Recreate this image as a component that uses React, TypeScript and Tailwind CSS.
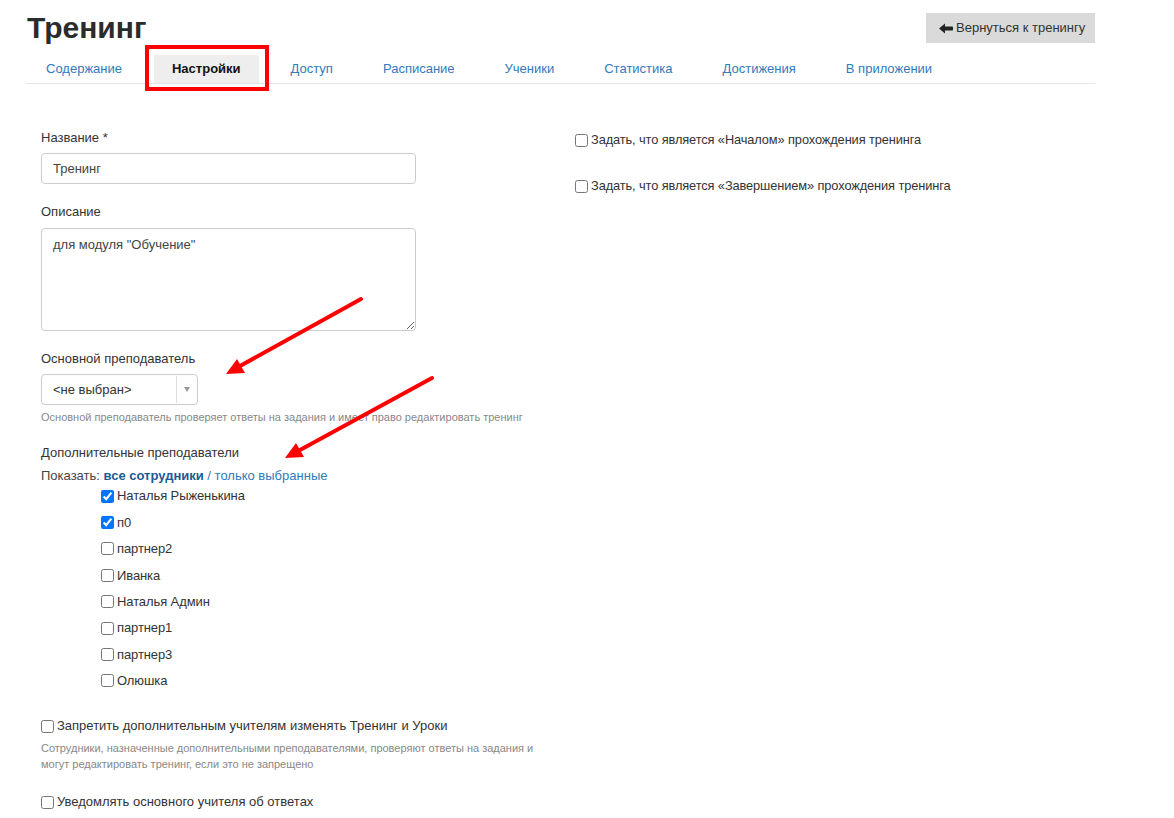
const tabs = [
  { name: "Содержание" },
  { name: "Настройки", active: true },
  { name: "Доступ" },
  { name: "Расписание" },
  { name: "Ученики" },
  { name: "Статистика" },
  { name: "Достижения" },
  { name: "В приложении" },
];

const teachers = [
  { name: "Наталья Рыженькина", checked: true },
  { name: "п0", checked: true },
  { name: "партнер2" },
  { name: "Иванка" },
  { name: "Наталья Админ" },
  { name: "партнер1" },
  { name: "партнер3" },
  { name: "Олюшка" },
];

function Check({ checked }: { checked?: boolean }) {
  return (
    <input
      type="checkbox"
      defaultChecked={checked}
      className="m-0 h-[13px] w-[13px] shrink-0"
    />
  );
}

export default function App() {
  return (
    <div className="relative min-h-[818px] bg-white font-['Liberation_Sans',Arial,sans-serif] text-[13px] text-[#333]">
      <div className="ml-[26px] w-[1069px]">
        {/* Header */}
        <div className="flex h-[55px] items-start justify-between">
          <h1 className="pt-[13px] pl-px text-[30px] font-bold leading-[30px] text-[#2b2b2b]">Тренинг</h1>
          <button className="mt-[13px] flex h-[30px] w-[169px] items-center gap-[3px] bg-[#dadada] pl-[13px] text-[13px] text-[#333]">
            <svg width="14" height="11" viewBox="0 0 14 11" className="shrink-0">
              <polygon points="0,5.5 6,0.5 6,10.5" fill="#222" />
              <rect x="5" y="3.5" width="9" height="4" rx="0.8" fill="#222" />
            </svg>
            <span>Вернуться к тренингу</span>
          </button>
        </div>

        {/* Tabs */}
        <div className="flex gap-[14px] border-b border-[#e6e6e6] pl-[2px]">
          {tabs.map((t) => (
            <div
              key={t.name}
              className={`flex h-[28px] items-center px-[18px] ${
                t.active ? "bg-[#eeeeee] font-bold text-[#111]" : "text-[#2f7bbd]"
              }`}
            >
              {t.name}
            </div>
          ))}
        </div>

        {/* Form */}
        <div className="flex pt-[45px]">
          <div className="w-[534px] pl-[15px]">
            <div className="leading-[18px]">Название *</div>
            <div className="mt-[6px] flex h-[31px] w-[375px] items-center rounded-[4px] border border-[#ccc] px-[11px] text-[#444]">
              Тренинг
            </div>

            <div className="mt-[19px] leading-[18px]">Описание</div>
            <textarea
              defaultValue={'для модуля "Обучение"'}
              className="mt-[7px] block h-[103px] w-[375px] rounded-[4px] border border-[#ccc] px-[11px] py-[6px] text-[13px] text-[#444] outline-none"
            />

            <div className="mt-[19px] leading-[18px]">Основной преподаватель</div>
            <div className="mt-[6px] flex h-[31px] w-[157px] items-stretch rounded-[4px] border border-[#ccc]">
              <div className="flex flex-1 items-center pl-[11px] text-[#333]">&lt;не выбран&gt;</div>
              <div className="my-[1px] flex w-[21px] items-center justify-center border-l border-[#ddd]">
                <div className="h-0 w-0 border-x-[3px] border-t-[5px] border-x-transparent border-t-[#999]" />
              </div>
            </div>
            <div className="mt-[4px] text-[11px] leading-[16px] text-[#888]">
              Основной преподаватель проверяет ответы на задания и имеет право редактировать тренинг
            </div>

            <div className="mt-[19px] leading-[18px]">Дополнительные преподаватели</div>
            <div className="mt-[5px] leading-[18px] text-[#444]">
              Показать: <span className="font-bold text-[#1b5a94]">все сотрудники</span>{" "}
              <span className="text-[#2f7bbd]">/ только выбранные</span>
            </div>
            <div className="-mt-[2px] pl-[60px]">
              {teachers.map((t) => (
                <label key={t.name} className="flex h-[26.4px] items-center gap-[3px] tracking-[-0.1px]">
                  <Check checked={t.checked} />
                  <span>{t.name}</span>
                </label>
              ))}
            </div>

            <label className="mt-[23px] flex items-center gap-[3px] text-[13px] leading-[18px]">
              <Check />
              <span>Запретить дополнительным учителям изменять Тренинг и Уроки</span>
            </label>
            <div className="mt-[5px] w-[496px] text-[11px] leading-[16px] text-[#888]">
              Сотрудники, назначенные дополнительными преподавателями, проверяют ответы на задания и могут редактировать тренинг, если это не запрещено
            </div>

            <label className="mt-[21px] flex items-center gap-[3px] text-[13px] leading-[18px]">
              <Check />
              <span>Уведомлять основного учителя об ответах</span>
            </label>
          </div>

          <div className="pl-[15px] pt-[2px] text-[12.8px] tracking-[-0.1px]">
            <label className="flex items-center gap-[3px] leading-[18px]">
              <Check />
              <span>Задать, что является «Началом» прохождения тренинга</span>
            </label>
            <label className="mt-[28px] flex items-center gap-[3px] leading-[18px]">
              <Check />
              <span>Задать, что является «Завершением» прохождения тренинга</span>
            </label>
          </div>
        </div>
      </div>

      {/* Annotation: highlight box */}
      <div className="pointer-events-none absolute left-[145px] top-[45px] h-[46px] w-[124px] border-4 border-[#ff0000]" />

      {/* Annotation: arrows */}
      <svg className="pointer-events-none absolute left-0 top-0" width="1174" height="818">
        <line x1="361" y1="299" x2="240" y2="366" stroke="#ff0000" strokeWidth="4" strokeLinecap="round" />
        <polygon points="226,374 245,373 237,359" fill="#ff0000" />
        <line x1="432" y1="378" x2="300" y2="450" stroke="#ff0000" strokeWidth="4" strokeLinecap="round" />
        <polygon points="285,458 304,457 296,443" fill="#ff0000" />
      </svg>
    </div>
  );
}
